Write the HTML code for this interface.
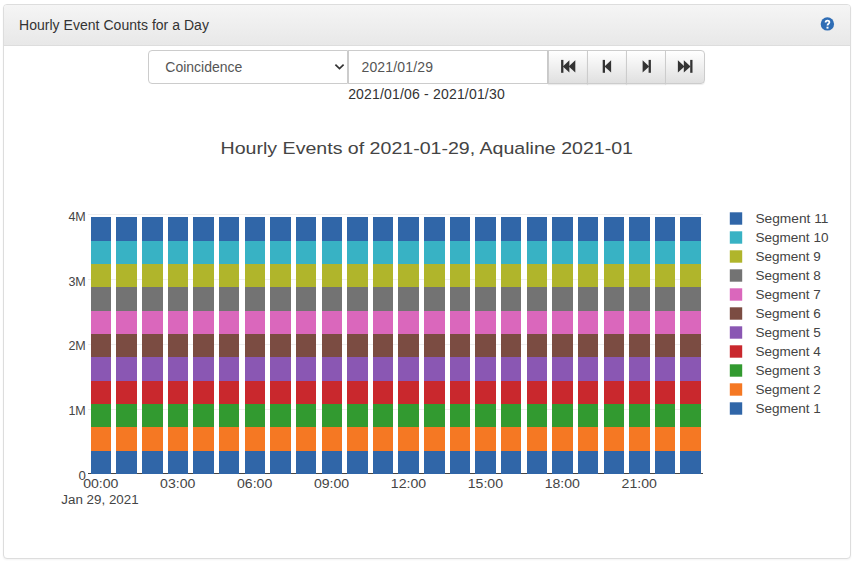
<!DOCTYPE html>
<html><head><meta charset="utf-8">
<style>
html,body{margin:0;padding:0;background:#fff;width:854px;height:563px;overflow:hidden;font-family:"Liberation Sans",sans-serif;color:#333}
.panel{position:absolute;left:3px;top:4px;width:848px;height:555px;box-sizing:border-box;border:1px solid #dddddd;border-radius:4px;box-shadow:0 1px 2px rgba(0,0,0,.05);background:#fff}
.hd{position:absolute;left:0;top:0;right:0;height:41px;box-sizing:border-box;border-bottom:1px solid #dddddd;border-radius:3px 3px 0 0;background:linear-gradient(to bottom,#f5f5f5 0,#e8e8e8 100%)}
.hd .title{position:absolute;left:15px;top:10px;font-size:14px;line-height:20px;color:#333;letter-spacing:0.03px}
.sel{position:absolute;left:148px;top:50px;width:200px;height:34px;box-sizing:border-box;border:1px solid #cccccc;border-radius:4px 0 0 4px;background:#fff;font-size:14px;line-height:20px;color:#555}
.inp{position:absolute;left:348px;top:50px;width:200px;height:34px;box-sizing:border-box;border:1px solid #cccccc;background:#fff;font-size:14px;line-height:20px;color:#555}
.btn{position:absolute;top:50px;width:40px;height:34px;box-sizing:border-box;border:1px solid #cccccc;background:linear-gradient(to bottom,#ffffff 0,#e0e0e0 100%);box-shadow:inset 0 1px 0 rgba(255,255,255,.15),0 1px 1px rgba(0,0,0,.075)}
.range{position:absolute;left:0;top:83.8px;width:853px;text-align:center;font-size:14px;line-height:20px;color:#333;letter-spacing:0.18px}
svg text.t{font-family:"Liberation Sans",sans-serif;font-size:12.3px;fill:#444}
</style></head><body>
<div class="panel">
  <div class="hd"><div class="title">Hourly Event Counts for a Day</div></div>
</div>
<svg style="position:absolute;left:0;top:0" width="854" height="40">
  <circle cx="827.4" cy="23.9" r="6.7" fill="#2f6db5"/>
  <path d="M825.6 22.5 C825.6 20.1 829.4 20.1 829.4 22.2 C829.4 23.7 827.5 23.8 827.5 25.5" fill="none" stroke="#fff" stroke-width="1.8"/>
  <rect x="826.5" y="26.7" width="2" height="1.9" fill="#fff"/>
</svg>
<div class="sel"><span style="position:absolute;left:16.3px;top:6px">Coincidence</span>
  <svg style="position:absolute;left:184.6px;top:12px" width="11" height="8" viewBox="0 0 11 8"><path d="M1.4 1.6 L5.5 5.5 L9.6 1.6" fill="none" stroke="#333" stroke-width="1.7"/></svg>
</div>
<div class="inp"><span style="position:absolute;left:12.5px;top:6px;letter-spacing:0.15px">2021/01/29</span></div>
<div class="btn" style="left:548px;border-radius:0"></div>
<div class="btn" style="left:587px;border-radius:0"></div>
<div class="btn" style="left:626px;border-radius:0"></div>
<div class="btn" style="left:665px;border-radius:0 4px 4px 0"></div>
<svg style="position:absolute;left:0;top:0" width="854" height="100">
  <g fill="#333">
    <rect x="561.1" y="59.9" width="2.3" height="12.9"/><path d="M562.8 66.45 L569.4 60.3 L569.4 72.6 Z"/><path d="M568.7 66.45 L575.3 60.3 L575.3 72.6 Z"/>
    <rect x="602.7" y="59.9" width="2.3" height="12.9"/><path d="M604.5 66.45 L611.1 60.3 L611.1 72.6 Z"/>
    <path d="M642.6 60.3 L649.2 66.45 L642.6 72.6 Z"/><rect x="648.6" y="59.9" width="2.3" height="12.9"/>
    <path d="M677.9 60.3 L684.5 66.45 L677.9 72.6 Z"/><path d="M683.8 60.3 L690.6 66.45 L683.8 72.6 Z"/><rect x="690.2" y="59.9" width="2.3" height="12.9"/>
  </g>
</svg>
<div class="range">2021/01/06 - 2021/01/30</div>
<svg style="position:absolute;left:0;top:0" width="854" height="563">
  <text x="426.8" y="153.7" text-anchor="middle" textLength="412.42" lengthAdjust="spacingAndGlyphs" style="font-family:'Liberation Sans',sans-serif;font-size:17.4px;fill:#444">Hourly Events of 2021-01-29, Aqualine 2021-01</text>
  <rect x="88" y="214" width="615" height="1" fill="#eeeeee"/><rect x="88" y="279" width="615" height="1" fill="#eeeeee"/><rect x="88" y="344" width="615" height="1" fill="#eeeeee"/><rect x="88" y="409" width="615" height="1" fill="#eeeeee"/>
  <rect x="88" y="473" width="615" height="1" fill="#444"/>
  <rect x="91" y="451" width="20" height="23" fill="#3066a8"/>
<rect x="91" y="427" width="20" height="24" fill="#f57823"/>
<rect x="91" y="404" width="20" height="23" fill="#329a30"/>
<rect x="91" y="381" width="20" height="23" fill="#c9282d"/>
<rect x="91" y="357" width="20" height="24" fill="#8a57b3"/>
<rect x="91" y="334" width="20" height="23" fill="#7b4c42"/>
<rect x="91" y="311" width="20" height="23" fill="#da67bc"/>
<rect x="91" y="287" width="20" height="24" fill="#737373"/>
<rect x="91" y="264" width="20" height="23" fill="#b0b52b"/>
<rect x="91" y="241" width="20" height="23" fill="#38b2c4"/>
<rect x="91" y="217" width="20" height="24" fill="#3066a8"/>
<rect x="116" y="451" width="21" height="23" fill="#3066a8"/>
<rect x="116" y="427" width="21" height="24" fill="#f57823"/>
<rect x="116" y="404" width="21" height="23" fill="#329a30"/>
<rect x="116" y="381" width="21" height="23" fill="#c9282d"/>
<rect x="116" y="357" width="21" height="24" fill="#8a57b3"/>
<rect x="116" y="334" width="21" height="23" fill="#7b4c42"/>
<rect x="116" y="311" width="21" height="23" fill="#da67bc"/>
<rect x="116" y="287" width="21" height="24" fill="#737373"/>
<rect x="116" y="264" width="21" height="23" fill="#b0b52b"/>
<rect x="116" y="241" width="21" height="23" fill="#38b2c4"/>
<rect x="116" y="217" width="21" height="24" fill="#3066a8"/>
<rect x="142" y="451" width="21" height="23" fill="#3066a8"/>
<rect x="142" y="427" width="21" height="24" fill="#f57823"/>
<rect x="142" y="404" width="21" height="23" fill="#329a30"/>
<rect x="142" y="381" width="21" height="23" fill="#c9282d"/>
<rect x="142" y="357" width="21" height="24" fill="#8a57b3"/>
<rect x="142" y="334" width="21" height="23" fill="#7b4c42"/>
<rect x="142" y="311" width="21" height="23" fill="#da67bc"/>
<rect x="142" y="287" width="21" height="24" fill="#737373"/>
<rect x="142" y="264" width="21" height="23" fill="#b0b52b"/>
<rect x="142" y="241" width="21" height="23" fill="#38b2c4"/>
<rect x="142" y="217" width="21" height="24" fill="#3066a8"/>
<rect x="168" y="451" width="20" height="23" fill="#3066a8"/>
<rect x="168" y="427" width="20" height="24" fill="#f57823"/>
<rect x="168" y="404" width="20" height="23" fill="#329a30"/>
<rect x="168" y="381" width="20" height="23" fill="#c9282d"/>
<rect x="168" y="357" width="20" height="24" fill="#8a57b3"/>
<rect x="168" y="334" width="20" height="23" fill="#7b4c42"/>
<rect x="168" y="311" width="20" height="23" fill="#da67bc"/>
<rect x="168" y="287" width="20" height="24" fill="#737373"/>
<rect x="168" y="264" width="20" height="23" fill="#b0b52b"/>
<rect x="168" y="241" width="20" height="23" fill="#38b2c4"/>
<rect x="168" y="217" width="20" height="24" fill="#3066a8"/>
<rect x="193" y="451" width="21" height="23" fill="#3066a8"/>
<rect x="193" y="427" width="21" height="24" fill="#f57823"/>
<rect x="193" y="404" width="21" height="23" fill="#329a30"/>
<rect x="193" y="381" width="21" height="23" fill="#c9282d"/>
<rect x="193" y="357" width="21" height="24" fill="#8a57b3"/>
<rect x="193" y="334" width="21" height="23" fill="#7b4c42"/>
<rect x="193" y="311" width="21" height="23" fill="#da67bc"/>
<rect x="193" y="287" width="21" height="24" fill="#737373"/>
<rect x="193" y="264" width="21" height="23" fill="#b0b52b"/>
<rect x="193" y="241" width="21" height="23" fill="#38b2c4"/>
<rect x="193" y="217" width="21" height="24" fill="#3066a8"/>
<rect x="219" y="451" width="20" height="23" fill="#3066a8"/>
<rect x="219" y="427" width="20" height="24" fill="#f57823"/>
<rect x="219" y="404" width="20" height="23" fill="#329a30"/>
<rect x="219" y="381" width="20" height="23" fill="#c9282d"/>
<rect x="219" y="357" width="20" height="24" fill="#8a57b3"/>
<rect x="219" y="334" width="20" height="23" fill="#7b4c42"/>
<rect x="219" y="311" width="20" height="23" fill="#da67bc"/>
<rect x="219" y="287" width="20" height="24" fill="#737373"/>
<rect x="219" y="264" width="20" height="23" fill="#b0b52b"/>
<rect x="219" y="241" width="20" height="23" fill="#38b2c4"/>
<rect x="219" y="217" width="20" height="24" fill="#3066a8"/>
<rect x="245" y="451" width="20" height="23" fill="#3066a8"/>
<rect x="245" y="427" width="20" height="24" fill="#f57823"/>
<rect x="245" y="404" width="20" height="23" fill="#329a30"/>
<rect x="245" y="381" width="20" height="23" fill="#c9282d"/>
<rect x="245" y="357" width="20" height="24" fill="#8a57b3"/>
<rect x="245" y="334" width="20" height="23" fill="#7b4c42"/>
<rect x="245" y="311" width="20" height="23" fill="#da67bc"/>
<rect x="245" y="287" width="20" height="24" fill="#737373"/>
<rect x="245" y="264" width="20" height="23" fill="#b0b52b"/>
<rect x="245" y="241" width="20" height="23" fill="#38b2c4"/>
<rect x="245" y="217" width="20" height="24" fill="#3066a8"/>
<rect x="270" y="451" width="21" height="23" fill="#3066a8"/>
<rect x="270" y="427" width="21" height="24" fill="#f57823"/>
<rect x="270" y="404" width="21" height="23" fill="#329a30"/>
<rect x="270" y="381" width="21" height="23" fill="#c9282d"/>
<rect x="270" y="357" width="21" height="24" fill="#8a57b3"/>
<rect x="270" y="334" width="21" height="23" fill="#7b4c42"/>
<rect x="270" y="311" width="21" height="23" fill="#da67bc"/>
<rect x="270" y="287" width="21" height="24" fill="#737373"/>
<rect x="270" y="264" width="21" height="23" fill="#b0b52b"/>
<rect x="270" y="241" width="21" height="23" fill="#38b2c4"/>
<rect x="270" y="217" width="21" height="24" fill="#3066a8"/>
<rect x="296" y="451" width="20" height="23" fill="#3066a8"/>
<rect x="296" y="427" width="20" height="24" fill="#f57823"/>
<rect x="296" y="404" width="20" height="23" fill="#329a30"/>
<rect x="296" y="381" width="20" height="23" fill="#c9282d"/>
<rect x="296" y="357" width="20" height="24" fill="#8a57b3"/>
<rect x="296" y="334" width="20" height="23" fill="#7b4c42"/>
<rect x="296" y="311" width="20" height="23" fill="#da67bc"/>
<rect x="296" y="287" width="20" height="24" fill="#737373"/>
<rect x="296" y="264" width="20" height="23" fill="#b0b52b"/>
<rect x="296" y="241" width="20" height="23" fill="#38b2c4"/>
<rect x="296" y="217" width="20" height="24" fill="#3066a8"/>
<rect x="322" y="451" width="20" height="23" fill="#3066a8"/>
<rect x="322" y="427" width="20" height="24" fill="#f57823"/>
<rect x="322" y="404" width="20" height="23" fill="#329a30"/>
<rect x="322" y="381" width="20" height="23" fill="#c9282d"/>
<rect x="322" y="357" width="20" height="24" fill="#8a57b3"/>
<rect x="322" y="334" width="20" height="23" fill="#7b4c42"/>
<rect x="322" y="311" width="20" height="23" fill="#da67bc"/>
<rect x="322" y="287" width="20" height="24" fill="#737373"/>
<rect x="322" y="264" width="20" height="23" fill="#b0b52b"/>
<rect x="322" y="241" width="20" height="23" fill="#38b2c4"/>
<rect x="322" y="217" width="20" height="24" fill="#3066a8"/>
<rect x="347" y="451" width="21" height="23" fill="#3066a8"/>
<rect x="347" y="427" width="21" height="24" fill="#f57823"/>
<rect x="347" y="404" width="21" height="23" fill="#329a30"/>
<rect x="347" y="381" width="21" height="23" fill="#c9282d"/>
<rect x="347" y="357" width="21" height="24" fill="#8a57b3"/>
<rect x="347" y="334" width="21" height="23" fill="#7b4c42"/>
<rect x="347" y="311" width="21" height="23" fill="#da67bc"/>
<rect x="347" y="287" width="21" height="24" fill="#737373"/>
<rect x="347" y="264" width="21" height="23" fill="#b0b52b"/>
<rect x="347" y="241" width="21" height="23" fill="#38b2c4"/>
<rect x="347" y="217" width="21" height="24" fill="#3066a8"/>
<rect x="373" y="451" width="20" height="23" fill="#3066a8"/>
<rect x="373" y="427" width="20" height="24" fill="#f57823"/>
<rect x="373" y="404" width="20" height="23" fill="#329a30"/>
<rect x="373" y="381" width="20" height="23" fill="#c9282d"/>
<rect x="373" y="357" width="20" height="24" fill="#8a57b3"/>
<rect x="373" y="334" width="20" height="23" fill="#7b4c42"/>
<rect x="373" y="311" width="20" height="23" fill="#da67bc"/>
<rect x="373" y="287" width="20" height="24" fill="#737373"/>
<rect x="373" y="264" width="20" height="23" fill="#b0b52b"/>
<rect x="373" y="241" width="20" height="23" fill="#38b2c4"/>
<rect x="373" y="217" width="20" height="24" fill="#3066a8"/>
<rect x="398" y="451" width="21" height="23" fill="#3066a8"/>
<rect x="398" y="427" width="21" height="24" fill="#f57823"/>
<rect x="398" y="404" width="21" height="23" fill="#329a30"/>
<rect x="398" y="381" width="21" height="23" fill="#c9282d"/>
<rect x="398" y="357" width="21" height="24" fill="#8a57b3"/>
<rect x="398" y="334" width="21" height="23" fill="#7b4c42"/>
<rect x="398" y="311" width="21" height="23" fill="#da67bc"/>
<rect x="398" y="287" width="21" height="24" fill="#737373"/>
<rect x="398" y="264" width="21" height="23" fill="#b0b52b"/>
<rect x="398" y="241" width="21" height="23" fill="#38b2c4"/>
<rect x="398" y="217" width="21" height="24" fill="#3066a8"/>
<rect x="424" y="451" width="21" height="23" fill="#3066a8"/>
<rect x="424" y="427" width="21" height="24" fill="#f57823"/>
<rect x="424" y="404" width="21" height="23" fill="#329a30"/>
<rect x="424" y="381" width="21" height="23" fill="#c9282d"/>
<rect x="424" y="357" width="21" height="24" fill="#8a57b3"/>
<rect x="424" y="334" width="21" height="23" fill="#7b4c42"/>
<rect x="424" y="311" width="21" height="23" fill="#da67bc"/>
<rect x="424" y="287" width="21" height="24" fill="#737373"/>
<rect x="424" y="264" width="21" height="23" fill="#b0b52b"/>
<rect x="424" y="241" width="21" height="23" fill="#38b2c4"/>
<rect x="424" y="217" width="21" height="24" fill="#3066a8"/>
<rect x="450" y="451" width="20" height="23" fill="#3066a8"/>
<rect x="450" y="427" width="20" height="24" fill="#f57823"/>
<rect x="450" y="404" width="20" height="23" fill="#329a30"/>
<rect x="450" y="381" width="20" height="23" fill="#c9282d"/>
<rect x="450" y="357" width="20" height="24" fill="#8a57b3"/>
<rect x="450" y="334" width="20" height="23" fill="#7b4c42"/>
<rect x="450" y="311" width="20" height="23" fill="#da67bc"/>
<rect x="450" y="287" width="20" height="24" fill="#737373"/>
<rect x="450" y="264" width="20" height="23" fill="#b0b52b"/>
<rect x="450" y="241" width="20" height="23" fill="#38b2c4"/>
<rect x="450" y="217" width="20" height="24" fill="#3066a8"/>
<rect x="475" y="451" width="21" height="23" fill="#3066a8"/>
<rect x="475" y="427" width="21" height="24" fill="#f57823"/>
<rect x="475" y="404" width="21" height="23" fill="#329a30"/>
<rect x="475" y="381" width="21" height="23" fill="#c9282d"/>
<rect x="475" y="357" width="21" height="24" fill="#8a57b3"/>
<rect x="475" y="334" width="21" height="23" fill="#7b4c42"/>
<rect x="475" y="311" width="21" height="23" fill="#da67bc"/>
<rect x="475" y="287" width="21" height="24" fill="#737373"/>
<rect x="475" y="264" width="21" height="23" fill="#b0b52b"/>
<rect x="475" y="241" width="21" height="23" fill="#38b2c4"/>
<rect x="475" y="217" width="21" height="24" fill="#3066a8"/>
<rect x="501" y="451" width="20" height="23" fill="#3066a8"/>
<rect x="501" y="427" width="20" height="24" fill="#f57823"/>
<rect x="501" y="404" width="20" height="23" fill="#329a30"/>
<rect x="501" y="381" width="20" height="23" fill="#c9282d"/>
<rect x="501" y="357" width="20" height="24" fill="#8a57b3"/>
<rect x="501" y="334" width="20" height="23" fill="#7b4c42"/>
<rect x="501" y="311" width="20" height="23" fill="#da67bc"/>
<rect x="501" y="287" width="20" height="24" fill="#737373"/>
<rect x="501" y="264" width="20" height="23" fill="#b0b52b"/>
<rect x="501" y="241" width="20" height="23" fill="#38b2c4"/>
<rect x="501" y="217" width="20" height="24" fill="#3066a8"/>
<rect x="527" y="451" width="20" height="23" fill="#3066a8"/>
<rect x="527" y="427" width="20" height="24" fill="#f57823"/>
<rect x="527" y="404" width="20" height="23" fill="#329a30"/>
<rect x="527" y="381" width="20" height="23" fill="#c9282d"/>
<rect x="527" y="357" width="20" height="24" fill="#8a57b3"/>
<rect x="527" y="334" width="20" height="23" fill="#7b4c42"/>
<rect x="527" y="311" width="20" height="23" fill="#da67bc"/>
<rect x="527" y="287" width="20" height="24" fill="#737373"/>
<rect x="527" y="264" width="20" height="23" fill="#b0b52b"/>
<rect x="527" y="241" width="20" height="23" fill="#38b2c4"/>
<rect x="527" y="217" width="20" height="24" fill="#3066a8"/>
<rect x="552" y="451" width="21" height="23" fill="#3066a8"/>
<rect x="552" y="427" width="21" height="24" fill="#f57823"/>
<rect x="552" y="404" width="21" height="23" fill="#329a30"/>
<rect x="552" y="381" width="21" height="23" fill="#c9282d"/>
<rect x="552" y="357" width="21" height="24" fill="#8a57b3"/>
<rect x="552" y="334" width="21" height="23" fill="#7b4c42"/>
<rect x="552" y="311" width="21" height="23" fill="#da67bc"/>
<rect x="552" y="287" width="21" height="24" fill="#737373"/>
<rect x="552" y="264" width="21" height="23" fill="#b0b52b"/>
<rect x="552" y="241" width="21" height="23" fill="#38b2c4"/>
<rect x="552" y="217" width="21" height="24" fill="#3066a8"/>
<rect x="578" y="451" width="20" height="23" fill="#3066a8"/>
<rect x="578" y="427" width="20" height="24" fill="#f57823"/>
<rect x="578" y="404" width="20" height="23" fill="#329a30"/>
<rect x="578" y="381" width="20" height="23" fill="#c9282d"/>
<rect x="578" y="357" width="20" height="24" fill="#8a57b3"/>
<rect x="578" y="334" width="20" height="23" fill="#7b4c42"/>
<rect x="578" y="311" width="20" height="23" fill="#da67bc"/>
<rect x="578" y="287" width="20" height="24" fill="#737373"/>
<rect x="578" y="264" width="20" height="23" fill="#b0b52b"/>
<rect x="578" y="241" width="20" height="23" fill="#38b2c4"/>
<rect x="578" y="217" width="20" height="24" fill="#3066a8"/>
<rect x="604" y="451" width="20" height="23" fill="#3066a8"/>
<rect x="604" y="427" width="20" height="24" fill="#f57823"/>
<rect x="604" y="404" width="20" height="23" fill="#329a30"/>
<rect x="604" y="381" width="20" height="23" fill="#c9282d"/>
<rect x="604" y="357" width="20" height="24" fill="#8a57b3"/>
<rect x="604" y="334" width="20" height="23" fill="#7b4c42"/>
<rect x="604" y="311" width="20" height="23" fill="#da67bc"/>
<rect x="604" y="287" width="20" height="24" fill="#737373"/>
<rect x="604" y="264" width="20" height="23" fill="#b0b52b"/>
<rect x="604" y="241" width="20" height="23" fill="#38b2c4"/>
<rect x="604" y="217" width="20" height="24" fill="#3066a8"/>
<rect x="629" y="451" width="21" height="23" fill="#3066a8"/>
<rect x="629" y="427" width="21" height="24" fill="#f57823"/>
<rect x="629" y="404" width="21" height="23" fill="#329a30"/>
<rect x="629" y="381" width="21" height="23" fill="#c9282d"/>
<rect x="629" y="357" width="21" height="24" fill="#8a57b3"/>
<rect x="629" y="334" width="21" height="23" fill="#7b4c42"/>
<rect x="629" y="311" width="21" height="23" fill="#da67bc"/>
<rect x="629" y="287" width="21" height="24" fill="#737373"/>
<rect x="629" y="264" width="21" height="23" fill="#b0b52b"/>
<rect x="629" y="241" width="21" height="23" fill="#38b2c4"/>
<rect x="629" y="217" width="21" height="24" fill="#3066a8"/>
<rect x="655" y="451" width="20" height="23" fill="#3066a8"/>
<rect x="655" y="427" width="20" height="24" fill="#f57823"/>
<rect x="655" y="404" width="20" height="23" fill="#329a30"/>
<rect x="655" y="381" width="20" height="23" fill="#c9282d"/>
<rect x="655" y="357" width="20" height="24" fill="#8a57b3"/>
<rect x="655" y="334" width="20" height="23" fill="#7b4c42"/>
<rect x="655" y="311" width="20" height="23" fill="#da67bc"/>
<rect x="655" y="287" width="20" height="24" fill="#737373"/>
<rect x="655" y="264" width="20" height="23" fill="#b0b52b"/>
<rect x="655" y="241" width="20" height="23" fill="#38b2c4"/>
<rect x="655" y="217" width="20" height="24" fill="#3066a8"/>
<rect x="680" y="451" width="21" height="23" fill="#3066a8"/>
<rect x="680" y="427" width="21" height="24" fill="#f57823"/>
<rect x="680" y="404" width="21" height="23" fill="#329a30"/>
<rect x="680" y="381" width="21" height="23" fill="#c9282d"/>
<rect x="680" y="357" width="21" height="24" fill="#8a57b3"/>
<rect x="680" y="334" width="21" height="23" fill="#7b4c42"/>
<rect x="680" y="311" width="21" height="23" fill="#da67bc"/>
<rect x="680" y="287" width="21" height="24" fill="#737373"/>
<rect x="680" y="264" width="21" height="23" fill="#b0b52b"/>
<rect x="680" y="241" width="21" height="23" fill="#38b2c4"/>
<rect x="680" y="217" width="21" height="24" fill="#3066a8"/>
  <text x="85.8" y="220.8" class="t" text-anchor="end" textLength="17.40" lengthAdjust="spacingAndGlyphs">4M</text><text x="85.8" y="285.8" class="t" text-anchor="end" textLength="17.40" lengthAdjust="spacingAndGlyphs">3M</text><text x="85.8" y="350" class="t" text-anchor="end" textLength="17.40" lengthAdjust="spacingAndGlyphs">2M</text><text x="85.8" y="415" class="t" text-anchor="end" textLength="17.40" lengthAdjust="spacingAndGlyphs">1M</text><text x="85.8" y="479.8" class="t" text-anchor="end" textLength="7.38" lengthAdjust="spacingAndGlyphs">0</text>
  <text x="100.80" y="487.8" class="t" text-anchor="middle" textLength="35.28" lengthAdjust="spacingAndGlyphs">00:00</text><text x="177.72" y="487.8" class="t" text-anchor="middle" textLength="35.28" lengthAdjust="spacingAndGlyphs">03:00</text><text x="254.64" y="487.8" class="t" text-anchor="middle" textLength="35.28" lengthAdjust="spacingAndGlyphs">06:00</text><text x="331.56" y="487.8" class="t" text-anchor="middle" textLength="35.28" lengthAdjust="spacingAndGlyphs">09:00</text><text x="408.48" y="487.8" class="t" text-anchor="middle" textLength="35.28" lengthAdjust="spacingAndGlyphs">12:00</text><text x="485.40" y="487.8" class="t" text-anchor="middle" textLength="35.28" lengthAdjust="spacingAndGlyphs">15:00</text><text x="562.32" y="487.8" class="t" text-anchor="middle" textLength="35.28" lengthAdjust="spacingAndGlyphs">18:00</text><text x="639.24" y="487.8" class="t" text-anchor="middle" textLength="35.28" lengthAdjust="spacingAndGlyphs">21:00</text>
  <text x="100" y="503.6" class="t" text-anchor="middle" textLength="77.27" lengthAdjust="spacingAndGlyphs">Jan 29, 2021</text>
  <rect x="729.8" y="212.3" width="12.4" height="12.4" fill="#3066a8"/>
<text x="755.4" y="223.0" class="t" textLength="73.09" lengthAdjust="spacingAndGlyphs">Segment 11</text>
<rect x="729.8" y="231.3" width="12.4" height="12.4" fill="#38b2c4"/>
<text x="755.4" y="242.0" class="t" textLength="73.09" lengthAdjust="spacingAndGlyphs">Segment 10</text>
<rect x="729.8" y="250.3" width="12.4" height="12.4" fill="#b0b52b"/>
<text x="755.4" y="261.0" class="t" textLength="65.45" lengthAdjust="spacingAndGlyphs">Segment 9</text>
<rect x="729.8" y="269.3" width="12.4" height="12.4" fill="#737373"/>
<text x="755.4" y="280.0" class="t" textLength="65.45" lengthAdjust="spacingAndGlyphs">Segment 8</text>
<rect x="729.8" y="288.3" width="12.4" height="12.4" fill="#da67bc"/>
<text x="755.4" y="299.0" class="t" textLength="65.45" lengthAdjust="spacingAndGlyphs">Segment 7</text>
<rect x="729.8" y="307.3" width="12.4" height="12.4" fill="#7b4c42"/>
<text x="755.4" y="318.0" class="t" textLength="65.45" lengthAdjust="spacingAndGlyphs">Segment 6</text>
<rect x="729.8" y="326.3" width="12.4" height="12.4" fill="#8a57b3"/>
<text x="755.4" y="337.0" class="t" textLength="65.45" lengthAdjust="spacingAndGlyphs">Segment 5</text>
<rect x="729.8" y="345.3" width="12.4" height="12.4" fill="#c9282d"/>
<text x="755.4" y="356.0" class="t" textLength="65.45" lengthAdjust="spacingAndGlyphs">Segment 4</text>
<rect x="729.8" y="364.3" width="12.4" height="12.4" fill="#329a30"/>
<text x="755.4" y="375.0" class="t" textLength="65.45" lengthAdjust="spacingAndGlyphs">Segment 3</text>
<rect x="729.8" y="383.3" width="12.4" height="12.4" fill="#f57823"/>
<text x="755.4" y="394.0" class="t" textLength="65.45" lengthAdjust="spacingAndGlyphs">Segment 2</text>
<rect x="729.8" y="402.3" width="12.4" height="12.4" fill="#3066a8"/>
<text x="755.4" y="413.0" class="t" textLength="65.45" lengthAdjust="spacingAndGlyphs">Segment 1</text>
</svg>
</body></html>
